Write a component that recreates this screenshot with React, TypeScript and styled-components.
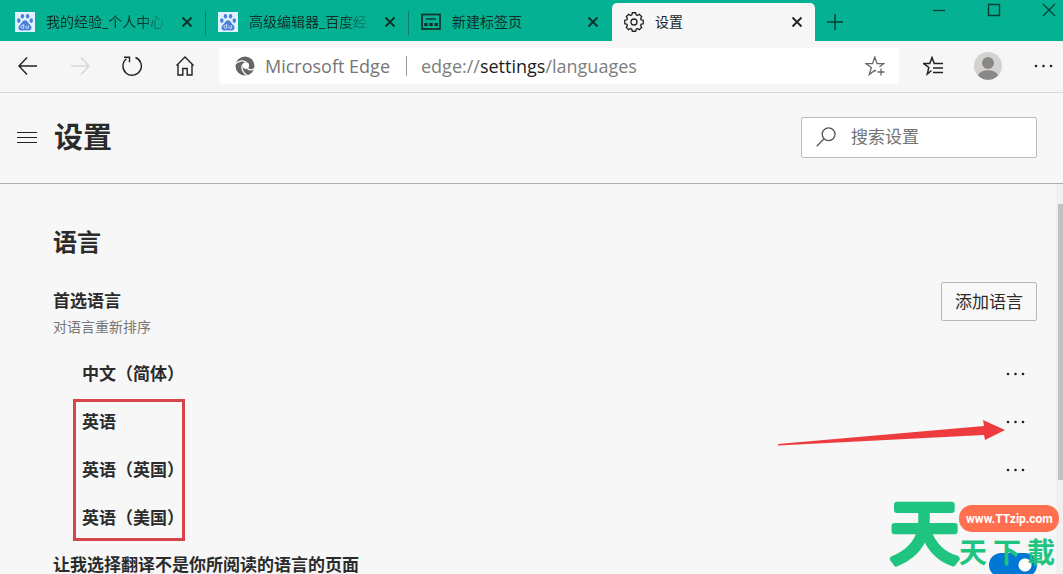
import React from "react";
import styled, { createGlobalStyle, css } from "styled-components";

const Global = createGlobalStyle`
  * { box-sizing: border-box; }
  body { margin: 0; background: #f7f7f7; color: #2b2b2b; font-family: "Open Sans", "Noto Sans CJK SC", sans-serif; overflow: hidden; }
  button, input { font: inherit; color: inherit; }
  h1, h2, h3, p, ul { margin: 0; padding: 0; }
  svg { display: block; flex: none; }
`;

const Window = styled.div`
  display: flex;
  flex-direction: column;
  height: 100vh;
  position: relative;
  overflow: hidden;
`;

const TabStrip = styled.header`
  display: flex;
  flex: none;
  height: 41px;
  padding: 3px 0 0 3px;
  background: #04b293;
`;

const Tab = styled.div<{ $active?: boolean }>`
  display: flex;
  align-items: center;
  flex: 0 1 203px;
  min-width: 0;
  padding: 0 12px;
  gap: 11px;
  color: #0f2f28;
  border-right: 1px solid transparent;
  ${(p) =>
    p.$active
      ? css`
          background: #f7f7f7;
          color: #222;
          border-right: 0;
          border-radius: 5px 5px 0 0;
        `
      : css`
          background: linear-gradient(#0a7f6a, #0a7f6a) right 8px / 1px 24px no-repeat border-box;
        `}
  &:nth-child(3) { background: none; }
`;

const TabTitle = styled.button<{ $fade?: boolean }>`
  flex: 1;
  min-width: 0;
  padding: 0;
  border: 0;
  background: none;
  text-align: left;
  font-size: 14px;
  line-height: 20px;
  white-space: nowrap;
  overflow: hidden;
  ${(p) => p.$fade && css`mask-image: linear-gradient(90deg, #000 76%, transparent);`}
`;

const IconButton = styled.button<{ $size?: number; $color?: string }>`
  display: flex;
  align-items: center;
  justify-content: center;
  flex: none;
  width: ${(p) => p.$size ?? 20}px;
  height: ${(p) => p.$size ?? 20}px;
  padding: 0;
  border: 0;
  background: none;
  color: ${(p) => p.$color ?? "#222"};
`;

const NewTab = styled.div`
  display: flex;
  align-items: center;
  padding-left: 10px;
`;

const WindowControls = styled.div`
  display: flex;
  gap: 41px;
  margin-left: auto;
  padding-right: 7px;
`;

const Toolbar = styled.nav`
  display: flex;
  align-items: center;
  flex: none;
  height: 52px;
  padding: 0 10px 1px 16px;
  border-bottom: 1px solid #dadada;
  background: #f6f6f6;
`;

const NavGroup = styled.div`
  display: flex;
  gap: 28px;
  margin-right: 23px;
`;

const AddressBar = styled.div`
  display: flex;
  align-items: center;
  flex: 1;
  min-width: 0;
  height: 36px;
  padding: 0 12px 0 16px;
  border-radius: 3px;
  background: #fff;
  font-size: 18px;
  color: #757575;
`;

const SiteName = styled.span`
  margin-left: 10px;
  padding-right: 16px;
  line-height: 20px;
  border-right: 1px solid #999;
  white-space: nowrap;
`;

const Url = styled.a`
  flex: 1;
  margin-left: 14px;
  color: #7d7d7d;
  text-decoration: none;
  white-space: nowrap;
  b { font-weight: 400; color: #1c1c1c; }
`;

const ActionGroup = styled.div`
  display: flex;
  align-items: center;
  gap: 31px;
  margin-left: 24px;
`;

const SettingsHeader = styled.div`
  display: flex;
  align-items: center;
  flex: none;
  height: 91px;
  padding: 0 26px 2px 17px;
  gap: 17px;
  border-bottom: 1px solid #adadad;
`;

const PageTitle = styled.h1`
  flex: 1;
  font-size: 29px;
  line-height: 40px;
`;

const SearchBox = styled.label`
  display: flex;
  align-items: center;
  gap: 15px;
  width: 236px;
  height: 41px;
  padding: 0 14px;
  border: 1px solid #bdbdbd;
  border-radius: 2px;
  background: #fff;
  color: #555;
`;

const SearchInput = styled.input`
  flex: 1;
  min-width: 0;
  height: 24px;
  padding: 0 0 2px;
  border: 0;
  outline: 0;
  background: none;
  font-size: 17px;
  &::placeholder { color: #737373; opacity: 1; }
`;

const Body = styled.div`
  display: flex;
  flex: 1;
  min-height: 0;
`;

const Content = styled.main`
  flex: 1;
  min-width: 0;
  overflow: hidden;
  padding: 40px 19px 0 53px;
`;

const SectionTitle = styled.h2`
  font-size: 24px;
  line-height: 36px;
`;

const SettingRow = styled.div`
  display: flex;
  align-items: center;
  justify-content: space-between;
  height: 46px;
`;

const PreferredRow = styled(SettingRow)`
  align-items: flex-start;
  height: 68px;
  margin-top: 22px;
`;

const Label = styled.h3`
  font-size: 17px;
  line-height: 20px;
  font-weight: 600;
`;

const PreferredText = styled.div`
  padding-top: 9px;
`;

const Hint = styled.p`
  margin-top: 6px;
  font-size: 14px;
  line-height: 20px;
  color: #767676;
`;

const AddButton = styled.button`
  height: 39px;
  padding: 0 13px;
  border: 1px solid #b8b8b8;
  border-radius: 2px;
  background: #f8f8f8;
  font-size: 17px;
  line-height: 24px;
`;

const LanguageList = styled.ul`
  position: relative;
  list-style: none;
  padding-left: 29px;
`;

const LanguageRow = styled.li`
  display: flex;
  align-items: center;
  justify-content: space-between;
  height: 48px;
  padding-right: 12px;
  font-size: 17px;
  line-height: 20px;
  font-weight: 600;
`;

const HighlightBox = styled.div`
  position: absolute;
  left: 20px;
  top: 49px;
  width: 112px;
  height: 142px;
  border: 3px solid #d64549;
`;

const Arrow = styled.svg`
  position: absolute;
  right: 31px;
  top: 68px;
`;

const Switch = styled.input`
  appearance: none;
  width: 48px;
  height: 24px;
  margin: 0;
  border-radius: 12px;
  background: radial-gradient(circle at 36px 12px, #fff 6px, #0078d4 7px);
`;

const ScrollTrack = styled.div`
  flex: none;
  width: 7px;
  padding: 20px 0 0 2px;
  background: #f0f0f0;
`;

const ScrollThumb = styled.div`
  height: 276px;
  background: #c1c1c1;
`;

const Watermark = styled.div`
  position: absolute;
  right: 4px;
  bottom: 0;
  width: 170px;
  height: 78px;
  pointer-events: none;
`;

const Line = ({ d, size = 20, w = 1.4, box = 20 }: { d: string; size?: number; w?: number; box?: number }) => (
  <svg width={size} height={size} viewBox={`0 0 ${box} ${box}`} fill="none" stroke="currentColor" strokeWidth={w} aria-hidden="true">
    <path d={d} />
  </svg>
);

const Close = ({ label }: { label: string }) => (
  <IconButton $size={12} $color="inherit" aria-label={label}>
    <Line size={12} box={12} w={1.8} d="M1.500 1.500l9 9M10.500 1.500l-9 9" />
  </IconButton>
);

const Paw = () => (
  <svg width="20" height="20" viewBox="0 0 20 20" aria-hidden="true">
    <rect width="20" height="20" fill="#dff1fd" />
    <g fill="#4a80d8">
      <ellipse cx="3.8" cy="8.6" rx="1.7" ry="2.3" />
      <ellipse cx="7.4" cy="4.2" rx="1.7" ry="2.3" />
      <ellipse cx="12.6" cy="4.2" rx="1.7" ry="2.3" />
      <ellipse cx="16.3" cy="8.6" rx="1.7" ry="2.3" />
      <path d="M10 8.3c2 0 2.7 2 4.2 3.6 1.8 1.800 3 3 2 5-.9 2-3.600 1.400-6.200 1.400s-5.300.6-6.200-1.400c-1-2 .2-3.200 2-5C7.300 10.300 8 8.300 10 8.300z" />
    </g>
    <path d="M8.700 12v4.200H7.300a1.300 1.300 0 010-2.800h1.400M11 13.400v2.200q0 .7.700.7h1.700v-2.900" fill="none" stroke="#dff1fd" strokeWidth="0.8" />
  </svg>
);

const NewTabIcon = () => (
  <svg width="20" height="18" viewBox="0 0 20 18" fill="none" stroke="currentColor" aria-hidden="true">
    <rect x="1" y="1.5" width="18" height="14.5" strokeWidth="1.7" />
    <path d="M5 6h10" strokeWidth="1.4" />
    <path d="M3.200 11.500h3.400M8.300 11.500h3.400M13.400 11.500h3.400" strokeWidth="3" />
  </svg>
);

const TEETH = 8;
const gearPath = Array.from({ length: TEETH }, (_, i) => {
  const points = [[7.4, -17], [9.4, -11], [9.4, 11], [7.4, 17]];
  return points
    .map(([r, a]) => {
      const t = ((i * (360 / TEETH) + a) * Math.PI) / 180;
      return `${(10 + r * Math.cos(t)).toFixed(2)} ${(10 + r * Math.sin(t)).toFixed(2)}`;
    })
    .join("L");
}).join("L");

const Gear = () => (
  <svg width="20" height="20" viewBox="0 0 20 20" fill="none" stroke="currentColor" strokeWidth="1.3" strokeLinejoin="round" aria-hidden="true">
    <path d={`M${gearPath}Z`} />
    <circle cx="10" cy="10" r="3" />
  </svg>
);

const EdgeMark = () => (
  <svg width="20" height="20" viewBox="0 0 20 20" aria-hidden="true">
    <circle cx="10" cy="10" r="9.5" fill="#666" />
    <circle cx="10.8" cy="9.6" r="3.3" fill="#fff" />
    <path d="M0 8.2C3 4.600 8.500 4 11.500 6.400" fill="none" stroke="#fff" strokeWidth="1.3" />
    <path d="M7.600 8.500C5.800 12.500 8 17.500 12.500 19.500" fill="none" stroke="#fff" strokeWidth="1.3" />
    <path d="M12.300 12.200C14.500 14.800 18 14 20 12" fill="none" stroke="#fff" strokeWidth="1.4" />
  </svg>
);

const Dots = () => (
  <svg width="20" height="4" viewBox="0 0 20 4" fill="currentColor" aria-hidden="true">
    <circle cx="3" cy="2" r="1.3" />
    <circle cx="10.500" cy="2" r="1.3" />
    <circle cx="18" cy="2" r="1.3" />
  </svg>
);

const languages = ["中文（简体）", "英语", "英语（英国）", "英语（美国）"];

export default function App() {
  return (
    <Window>
      <Global />
      <TabStrip>
        <Tab>
          <Paw />
          <TabTitle $fade>我的经验_个人中心</TabTitle>
          <Close label="关闭 我的经验" />
        </Tab>
        <Tab>
          <Paw />
          <TabTitle $fade>高级编辑器_百度经</TabTitle>
          <Close label="关闭 高级编辑器" />
        </Tab>
        <Tab>
          <NewTabIcon />
          <TabTitle>新建标签页</TabTitle>
          <Close label="关闭 新建标签页" />
        </Tab>
        <Tab $active>
          <Gear />
          <TabTitle>设置</TabTitle>
          <Close label="关闭 设置" />
        </Tab>
        <NewTab>
          <IconButton aria-label="新建标签页" $color="#0b3d33">
            <Line d="M10 2v16M2 10h16" w={1.5} />
          </IconButton>
        </NewTab>
        <WindowControls>
          <IconButton $size={14} $color="#0b3d33" aria-label="最小化"><Line size={14} box={14} d="M1 7.500h12" /></IconButton>
          <IconButton $size={14} $color="#0b3d33" aria-label="最大化"><Line size={14} box={14} d="M1.500 1.500h11v11h-11z" /></IconButton>
          <IconButton $size={14} $color="#0b3d33" aria-label="关闭"><Line size={14} box={14} w={1.2} d="M1 1l12 12M13 1L1 13" /></IconButton>
        </WindowControls>
      </TabStrip>

      <Toolbar>
        <NavGroup>
          <IconButton $size={24} aria-label="返回"><Line d="M19 10H1M9 1.500L1 10l8 8.500" /></IconButton>
          <IconButton $size={24} $color="#d5d5d5" aria-label="前进"><Line d="M1 10h18M11 1.500l8 8.500-8 8.500" /></IconButton>
          <IconButton $size={24} aria-label="刷新"><Line d="M13.500 1.500A9.200 9.200 0 1 1 4.500 2.800M2 1.300h5.500v5" /></IconButton>
          <IconButton $size={24} aria-label="主页"><Line d="M2.500 9.500L11 1l8.500 8.500M4 8.300V19h4.800v-6.500h4.400V19H18V8.300" /></IconButton>
        </NavGroup>
        <AddressBar>
          <EdgeMark />
          <SiteName>Microsoft Edge</SiteName>
          <Url href="#languages">edge://<b>settings</b>/languages</Url>
          <IconButton $size={24} $color="#666" aria-label="收藏">
            <Line w={1.3} d="M11 15.300l-1.200-.9L4.300 18.500l2-7L.8 7.600h6.800L9.800 1l2.300 6.600h6.700l-4.300 3.200M16 12.500v7M12.500 16h7" />
          </IconButton>
        </AddressBar>
        <ActionGroup>
          <IconButton aria-label="收藏夹">
            <Line w={1.5} d="M8.500 14.500L4.300 18l1.500-6.500L.8 7.600h6L9 1.500l2.200 6.100H20M10 12h10M10 16.500h10" />
          </IconButton>
          <IconButton $size={28} aria-label="用户">
            <svg width="28" height="28" viewBox="0 0 28 28" aria-hidden="true">
              <circle cx="14" cy="14" r="14" fill="#d4d2d0" />
              <circle cx="14" cy="11" r="6" fill="#8a8886" />
              <path d="M4 23.500C6 16.500 22 16.500 24 23.500A14 14 0 0 1 4 23.500z" fill="#8a8886" />
            </svg>
          </IconButton>
          <IconButton aria-label="更多"><Dots /></IconButton>
        </ActionGroup>
      </Toolbar>

      <SettingsHeader>
        <IconButton aria-label="菜单"><Line w={1.2} d="M0 5.500h20M0 10.500h20M0 15.500h20" /></IconButton>
        <PageTitle>设置</PageTitle>
        <SearchBox>
          <Line w={1.3} d="M.8 19.200L7.600 12.300M19 7.300A6.400 6.400 0 1 1 6.200 7.300A6.400 6.400 0 1 1 19 7.300z" />
          <SearchInput type="text" placeholder="搜索设置" aria-label="搜索设置" />
        </SearchBox>
      </SettingsHeader>

      <Body>
        <Content>
          <SectionTitle>语言</SectionTitle>
          <PreferredRow>
            <PreferredText>
              <Label>首选语言</Label>
              <Hint>对语言重新排序</Hint>
            </PreferredText>
            <AddButton>添加语言</AddButton>
          </PreferredRow>
          <LanguageList>
            {languages.map((name) => (
              <LanguageRow key={name}>
                {name}
                <IconButton aria-label={`${name} 更多操作`}><Dots /></IconButton>
              </LanguageRow>
            ))}
            <HighlightBox />
            <Arrow width="230" height="28" viewBox="0 0 230 28" aria-hidden="true">
              <path d="M2 26L208 8 207 2 229 12 209 22 208 17 2 27.500z" fill="#ee3b3d" />
            </Arrow>
          </LanguageList>
          <SettingRow>
            <Label as="label" htmlFor="translate">让我选择翻译不是你所阅读的语言的页面</Label>
            <Switch id="translate" type="checkbox" defaultChecked />
          </SettingRow>
        </Content>
        <ScrollTrack><ScrollThumb /></ScrollTrack>
      </Body>

      <Watermark>
        <svg width="170" height="78" viewBox="0 0 170 78" fontFamily="Noto Sans CJK SC, sans-serif" fontWeight="700">
          <text x="1" y="62" fontSize="69" fontWeight="400" fill="#1ec480" stroke="#1ec480" strokeWidth="6" strokeLinejoin="round">天</text>
          <g fontSize="28" fill="#1ec480">
            <text x="70" y="67">天</text>
            <text x="104" y="67">下</text>
            <text x="138" y="67">載</text>
          </g>
          <rect x="70" y="9" width="100" height="27" rx="13" fill="#ff7050" />
          <text x="77" y="27" fontSize="12" fill="#fff" fontFamily="Roboto, sans-serif">www.TTzip.com</text>
        </svg>
      </Watermark>
    </Window>
  );
}
